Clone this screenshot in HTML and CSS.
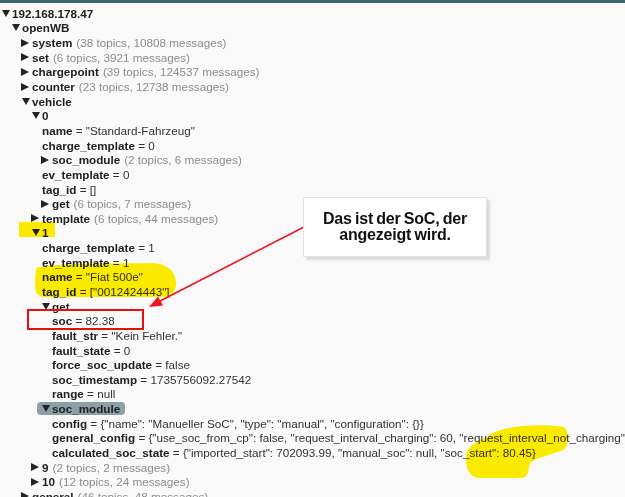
FILE: index.html
```html
<!DOCTYPE html>
<html lang="en">
<head>
  <meta charset="UTF-8">
  <title>MQTT Explorer - openWB</title>
  <link rel="stylesheet" href="styles.css">
</head>
<body>
  <div class="topbar"></div>

  <div class="tree">
    <div class="node open">
      <div class="row"><span class="tog"></span><b>192.168.178.47</b></div>
      <div class="kids">
        <div class="node open">
          <div class="row"><span class="tog"></span><b>openWB</b></div>
          <div class="kids">
            <div class="node closed"><div class="row"><span class="tog"></span><b>system</b><span class="count">(38 topics, 10808 messages)</span></div></div>
            <div class="node closed"><div class="row"><span class="tog"></span><b>set</b><span class="count">(6 topics, 3921 messages)</span></div></div>
            <div class="node closed"><div class="row"><span class="tog"></span><b>chargepoint</b><span class="count">(39 topics, 124537 messages)</span></div></div>
            <div class="node closed"><div class="row"><span class="tog"></span><b>counter</b><span class="count">(23 topics, 12738 messages)</span></div></div>
            <div class="node open">
              <div class="row"><span class="tog"></span><b>vehicle</b></div>
              <div class="kids">
                <!-- vehicle 0 -->
                <div class="node open">
                  <div class="row"><span class="tog"></span><b>0</b></div>
                  <div class="kids">
                    <div class="row leaf"><b>name</b>&nbsp;= "Standard-Fahrzeug"</div>
                    <div class="row leaf"><b>charge_template</b>&nbsp;= 0</div>
                    <div class="node closed"><div class="row"><span class="tog"></span><b>soc_module</b><span class="count">(2 topics, 6 messages)</span></div></div>
                    <div class="row leaf"><b>ev_template</b>&nbsp;= 0</div>
                    <div class="row leaf"><b>tag_id</b>&nbsp;= []</div>
                    <div class="node closed"><div class="row"><span class="tog"></span><b>get</b><span class="count">(6 topics, 7 messages)</span></div></div>
                  </div>
                </div>
                <div class="node closed"><div class="row"><span class="tog"></span><b>template</b><span class="count">(6 topics, 44 messages)</span></div></div>
                <!-- vehicle 1 -->
                <div class="node open">
                  <div class="row"><span class="tog"></span><b>1</b></div>
                  <div class="kids">
                    <div class="row leaf"><b>charge_template</b>&nbsp;= 1</div>
                    <div class="row leaf"><b>ev_template</b>&nbsp;= 1</div>
                    <div class="row leaf"><b>name</b>&nbsp;= "Fiat 500e"</div>
                    <div class="row leaf"><b>tag_id</b>&nbsp;= ["0012424443"]</div>
                    <div class="node open">
                      <div class="row"><span class="tog"></span><b>get</b></div>
                      <div class="kids">
                        <div class="row leaf"><b>soc</b>&nbsp;= 82.38</div>
                        <div class="row leaf"><b>fault_str</b>&nbsp;= "Kein Fehler."</div>
                        <div class="row leaf"><b>fault_state</b>&nbsp;= 0</div>
                        <div class="row leaf"><b>force_soc_update</b>&nbsp;= false</div>
                        <div class="row leaf"><b>soc_timestamp</b>&nbsp;= 1735756092.27542</div>
                        <div class="row leaf"><b>range</b>&nbsp;= null</div>
                      </div>
                    </div>
                    <div class="node open">
                      <div class="row"><span class="selected"><span class="tog"></span><b>soc_module</b></span></div>
                      <div class="kids">
                        <div class="row leaf"><b>config</b>&nbsp;= {"name": "Manueller SoC", "type": "manual", "configuration": {}}</div>
                        <div class="row leaf"><b>general_config</b>&nbsp;= {"use_soc_from_cp": false, "request_interval_charging": 60, "request_interval_not_charging": 720}</div>
                        <div class="row leaf"><b>calculated_soc_state</b>&nbsp;= {"imported_start": 702093.99, "manual_soc": null, "soc_start": 80.45}</div>
                      </div>
                    </div>
                  </div>
                </div>
                <div class="node closed"><div class="row"><span class="tog"></span><b>9</b><span class="count">(2 topics, 2 messages)</span></div></div>
                <div class="node closed"><div class="row"><span class="tog"></span><b>10</b><span class="count">(12 topics, 24 messages)</span></div></div>
              </div>
            </div>
            <div class="node closed"><div class="row"><span class="tog"></span><b>general</b><span class="count">(46 topics, 48 messages)</span></div></div>
          </div>
        </div>
      </div>
    </div>
  </div>

  <!-- hand-drawn annotations on top of the screenshot -->
  <svg class="marks" width="625" height="497" viewBox="0 0 625 497">
    <g class="marker">
      <rect x="19" y="222" width="36" height="15"/>
      <path d="M36 268 C 60 262, 120 264, 150 263 C 168 263, 176 272, 176 283 C 176 293, 170 297, 160 297 L 45 297 C 37 297, 35 292, 35 284 Z"/>
      <path d="M488 437 C 496 426, 540 423, 564 427 C 570 433, 569 446, 563 450 C 550 455, 536 458, 531 462 C 527 468, 531 476, 522 478 L 478 478 C 468 476, 464 465, 467 452 C 470 444, 480 440, 488 437 Z"/>
    </g>
    <rect class="redbox" x="28" y="310" width="115" height="19"/>
    <line class="arrow" x1="304" y1="227" x2="160" y2="301"/>
    <polygon class="arrowhead" points="149,307 163,305.5 158,296.5"/>
  </svg>

  <div class="callout">Das ist der SoC, der<br>angezeigt wird.</div>
</body>
</html>
```

FILE: styles.css
```css
/* Reset */
* {
  margin: 0;
  padding: 0;
  box-sizing: border-box;
}

body {
  font-family: 'Liberation Sans', Arial, sans-serif;
  font-size: 11.7px;
  color: #333;
  background-color: #f9f9f9;
  width: 625px;
  height: 497px;
  overflow: hidden;
  position: relative;
}

.topbar {
  height: 3px;
  background-color: #3d6570;
}

/* Topic tree */
.tree {
  padding: 3px 0 0 1px;
}

.kids {
  padding-left: 10px;
}

.row {
  display: flex;
  align-items: center;
  height: 14.65px;
  white-space: nowrap;
}

.row b {
  color: #222;
}

.leaf {
  padding-left: 1px;
}

.count {
  color: #8c8c8c;
  margin-left: 4px;
}

/* Toggle triangles */
.tog {
  flex: 0 0 11px;
  display: flex;
  align-items: center;
  height: 10px;
}

.tog::before {
  content: '';
  display: block;
}

.closed > .row .tog::before {
  border-left: 8px solid #222;
  border-top: 4.5px solid transparent;
  border-bottom: 4.5px solid transparent;
}

.open > .row .tog::before {
  margin-left: 1px;
  border-top: 7px solid #222;
  border-left: 4px solid transparent;
  border-right: 4px solid transparent;
}

.selected {
  display: flex;
  align-items: center;
  background-color: #8a9fa6;
  border-radius: 4px;
  margin-left: -4px;
  padding: 0 5px 0 4px;
  height: 13px;
}

/* Annotations */
.marks {
  position: absolute;
  left: 0;
  top: 0;
  pointer-events: none;
}

.marker {
  fill: #fff000;
  mix-blend-mode: multiply;
}

.redbox {
  fill: none;
  stroke: #e8100f;
  stroke-width: 2;
}

.arrow {
  stroke: #f0141a;
  stroke-width: 1.6;
}

.arrowhead {
  fill: #f0141a;
}

.callout {
  position: absolute;
  left: 303px;
  top: 197px;
  width: 184px;
  height: 60px;
  background-color: #fff;
  border: 1px solid #e2e2e2;
  box-shadow: 3px 3px 2px rgba(0, 0, 0, 0.12);
  display: flex;
  align-items: center;
  justify-content: center;
  text-align: center;
  font-size: 16px;
  font-weight: bold;
  line-height: 16px;
  letter-spacing: -0.2px;
  word-spacing: -1px;
  color: #111;
}
```
